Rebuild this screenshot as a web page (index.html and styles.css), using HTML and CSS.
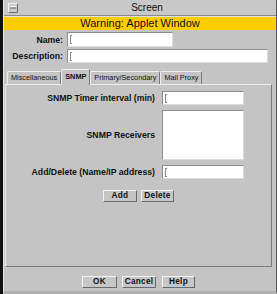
FILE: index.html
```html
<!DOCTYPE html>
<html>
<head>
<meta charset="utf-8">
<link rel="stylesheet" href="styles.css">
</head>
<body>
<div class="desk">
  <div class="window">
    <div class="titlebar">
      <div class="menubtn">
        <svg width="10" height="10" viewBox="0 0 10 10">
          <rect x="0.5" y="0.5" width="9" height="9" fill="#c9c9c9" stroke="#f2f2f2"/>
          <path d="M9.5 0.5V9.5H0.5" fill="none" stroke="#6a6a6a"/>
          <rect x="2" y="3" width="6" height="1.5" fill="#f4f4f4"/>
          <rect x="2" y="4.5" width="6" height="1" fill="#6a6a6a"/>
        </svg>
      </div>
      <div class="title">Screen</div>
    </div>
    <div class="warning">Warning: Applet Window</div>
    <div class="form">
      <div class="lbl">Name:</div>
      <div class="field name"><span class="caret"></span></div>
      <div class="lbl">Description:</div>
      <div class="field desc"><span class="caret"></span></div>
    </div>
    <div class="tabs">
      <div class="tab">Miscellaneous</div>
      <div class="tab sel">SNMP</div>
      <div class="tab">Primary/Secondary</div>
      <div class="tab">Mail Proxy</div>
    </div>
    <div class="panel">
      <div class="grid">
        <div class="plbl">SNMP Timer interval (min)</div>
        <div class="field pf"><span class="caret"></span></div>
        <div class="plbl">SNMP Receivers</div>
        <div class="list"></div>
        <div class="plbl">Add/Delete (Name/IP address)</div>
        <div class="field pf"><span class="caret"></span></div>
      </div>
      <div class="btnrow">
        <button class="btn b-add">Add</button>
        <button class="btn b-del">Delete</button>
      </div>
    </div>
    <div class="bottom">
      <button class="btn b-ok">OK</button>
      <button class="btn b-cancel">Cancel</button>
      <button class="btn b-help">Help</button>
    </div>
  </div>
</div>
</body>
</html>
```

FILE: styles.css
```css
html, body {
  margin: 0;
  padding: 0;
}
body {
  width: 277px;
  height: 294px;
  overflow: hidden;
  background: #111;
  font-family: "Liberation Sans", Arial, sans-serif;
  color: #111;
}
.desk {
  display: flex;
  height: 294px;
}
.window {
  margin-left: 3px;
  width: 274px;
  height: 294px;
  box-sizing: border-box;
  background: #c4c4c4;
  border-left: 1px solid #e6e6e6;
  border-right: 1px solid #5a5a5a;
  border-bottom: 3px solid #b0b0b0;
  display: flex;
  flex-direction: column;
}
.titlebar {
  height: 15px;
  display: flex;
  align-items: center;
  background: #c8c8c8;
  border-bottom: 1px solid #8a8a8a;
}
.menubtn {
  margin-left: 4px;
  width: 10px;
  height: 10px;
  display: flex;
}
.title {
  flex: 1;
  text-align: center;
  font-size: 10px;
  line-height: 15px;
}
.warning {
  height: 13px;
  border-top: 1px solid #e0e0e0;
  background: #ffcc00;
  text-align: center;
  font-size: 11px;
  line-height: 13px;
  color: #111;
}
.form {
  margin-top: 2px;
  display: grid;
  grid-template-columns: 59px auto;
  grid-template-rows: 15px 14px;
  column-gap: 4px;
  row-gap: 2px;
  align-items: center;
  justify-items: start;
}
.lbl {
  justify-self: end;
  font-weight: bold;
  font-size: 8.7px;
}
.field {
  box-sizing: border-box;
  height: 100%;
  background: #fff;
  border: 1px solid;
  border-color: #8c8c8c #dcdcdc #dcdcdc #8c8c8c;
  display: flex;
  align-items: center;
}
.name { width: 106px; }
.desc { width: 201px; }
.caret {
  margin-left: 2px;
  width: 1px;
  height: 7px;
  border: 1px solid #8a8a8a;
  border-right: none;
}
.tabs {
  margin-top: 6px;
  margin-left: 3px;
  height: 15px;
  display: flex;
  align-items: flex-end;
  position: relative;
  z-index: 1;
}
.tab {
  box-sizing: border-box;
  height: 13px;
  padding: 0 3px;
  font-size: 7.3px;
  line-height: 12px;
  border-top: 1px solid #eeeeee;
  border-left: 1px solid #eeeeee;
  border-right: 1px solid #7a7a7a;
  border-top-left-radius: 2px;
  border-top-right-radius: 2px;
  white-space: nowrap;
  background: #c4c4c4;
}
.tab.sel {
  height: 16px;
  margin-bottom: -1px;
  font-weight: bold;
  line-height: 14px;
  padding: 0 3px;
}
.panel {
  margin-left: 1px;
  width: 267px;
  height: 183px;
  box-sizing: border-box;
  border: 1px solid;
  border-color: #eeeeee #7a7a7a #7a7a7a #eeeeee;
  padding-top: 6px;
  display: flex;
  flex-direction: column;
}
.grid {
  display: grid;
  grid-template-columns: 149px 82px;
  grid-template-rows: 14px 50px 14px;
  column-gap: 7px;
  row-gap: 5px;
  align-items: center;
}
.plbl {
  justify-self: end;
  font-weight: bold;
  font-size: 8.7px;
  white-space: nowrap;
}
.pf { width: 82px; }
.list {
  box-sizing: border-box;
  height: 100%;
  background: #fff;
  border: 1px solid;
  border-color: #8c8c8c #dcdcdc #dcdcdc #8c8c8c;
}
.btnrow {
  margin-top: 11px;
  display: flex;
  justify-content: center;
  gap: 4px;
}
.btn {
  box-sizing: border-box;
  height: 12px;
  padding: 0;
  margin: 0;
  background: #c6c6c6;
  border: 1px solid;
  border-color: #f2f2f2 #6a6a6a #6a6a6a #f2f2f2;
  font-family: "Liberation Sans", Arial, sans-serif;
  font-weight: bold;
  font-size: 8.2px;
  letter-spacing: 0.3px;
  line-height: 10px;
  color: #111;
}
.b-add { width: 34px; }
.b-del { width: 33px; }
.bottom {
  margin-top: 9px;
  margin-left: 1px;
  width: 267px;
  display: flex;
  justify-content: center;
  gap: 5px;
}
.b-ok { width: 35px; }
.b-cancel { width: 34px; }
.b-help { width: 33px; margin-left: 1px; }
```
